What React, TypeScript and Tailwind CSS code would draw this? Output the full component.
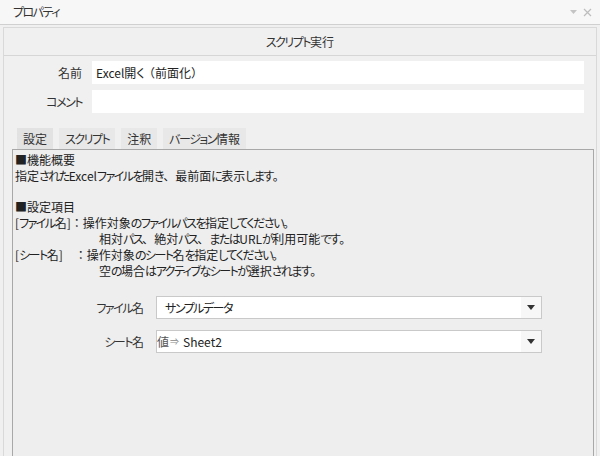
import React from 'react'

// kana runs get squeezed, full-width punctuation keeps its full width
function J({ t }: { t: string }) {
  const parts = t.match(/[\u3041-\u30ff]+|[、。（）：　]+|[^\u3041-\u30ff、。（）：　]+/g) ?? []
  return (
    <>
      {parts.map((p, i) =>
        /^[\u3041-\u30ff]/.test(p) ? (
          <span key={i} className="tracking-[-1.5px]">{p}</span>
        ) : /^[、。（）：　]/.test(p) ? (
          <span key={i} className="[font-feature-settings:normal]">{p}</span>
        ) : (
          <React.Fragment key={i}>{p}</React.Fragment>
        )
      )}
    </>
  )
}

function Tab({ label, active }: { label: string; active?: boolean }) {
  return (
    <div
      className={
        'h-[21px] px-[6px] flex items-center text-[12px] text-[#333] ' +
        (active ? 'bg-[#e2e2e2]' : 'bg-[#e8e8e8]')
      }
    >
      <J t={label} />
    </div>
  )
}

function Select({ value }: { value: React.ReactNode }) {
  return (
    <div className="flex-1 h-[23px] flex items-center bg-white border border-[#c9c9c9]">
      <div className="flex-1 flex items-center text-[12px] text-[#222] pl-[8px]">{value}</div>
      <div className="w-[20px] h-full flex items-center justify-center bg-[#f7f7f7]">
        <svg width="8" height="5" viewBox="0 0 8 5">
          <path d="M0 0 L8 0 L4 5 Z" fill="#333" />
        </svg>
      </div>
    </div>
  )
}

export default function App() {
  return (
    <div className="w-[600px] h-[456px] bg-[#f0f0f0] flex flex-col overflow-hidden text-[#1e1e1e] font-['Noto_Sans_CJK_JP','Noto_Sans',sans-serif] [font-feature-settings:'palt']">
      {/* title bar */}
      <div className="h-[25px] bg-[#f7f7f7] border-b border-[#d0d0d0] flex items-center justify-between pl-[13px] pr-[8px]">
        <span className="text-[12px] text-[#333]"><J t="プロパティ" /></span>
        <div className="flex items-center gap-[6px]">
          <svg width="7" height="4" viewBox="0 0 7 4">
            <path d="M0 0 L7 0 L3.5 4 Z" fill="#c4c4c4" />
          </svg>
          <svg width="9" height="9" viewBox="0 0 9 9">
            <path d="M1 1 L8 8 M8 1 L1 8" stroke="#bdbdbd" strokeWidth="1.2" />
          </svg>
        </div>
      </div>

      <div className="flex-1 mx-[3px] mt-[2px] border-l border-r border-t border-[#d9d9d9] flex flex-col">
        {/* header */}
        <div className="h-[28px] bg-[#f0f0f0] border-b border-[#d6d6d6] flex items-center justify-center text-[12px] text-[#333]">
          <J t="スクリプト実行" />
        </div>

        {/* name/comment */}
        <div className="flex flex-col gap-[6px] pt-[5px] pr-[12px]">
          <div className="flex items-center">
            <div className="w-[88px] text-right pr-[10px] text-[12px] text-[#333]">名前</div>
            <div className="flex-1 h-[23px] bg-white flex items-center pl-[4px] text-[12px] text-[#222]">
              <J t="Excel開く（前面化）" />
            </div>
          </div>
          <div className="flex items-center">
            <div className="w-[88px] text-right pr-[10px] text-[12px] text-[#333]"><J t="コメント" /></div>
            <div className="flex-1 h-[23px] bg-white" />
          </div>
        </div>

        {/* tabs */}
        <div className="flex gap-[6px] pl-[13px] mt-[15px]">
          <Tab label="設定" active />
          <Tab label="スクリプト" />
          <Tab label="注釈" />
          <Tab label="バージョン情報" />
        </div>

        {/* tab panel */}
        <div className="flex-1 ml-[8px] mr-[2px] border-l border-t border-r border-[#a8a8a8] bg-[#eeeeee] pt-[2px] pl-[2px]">
          <div className="text-[12px] leading-[16px] text-[#222]">
            <div><J t="■機能概要" /></div>
            <div><J t="指定されたExcelファイルを開き、最前面に表示します。" /></div>
            <div className="h-[15px]" />
            <div><J t="■設定項目" /></div>
            <div><J t="[ファイル名]：操作対象のファイルパスを指定してください。" /></div>
            <div className="pl-[84px]"><J t="相対パス、絶対パス、またはURLが利用可能です。" /></div>
            <div><J t="[シート名]　：操作対象のシート名を指定してください。" /></div>
            <div className="pl-[84px]"><J t="空の場合はアクティブなシートが選択されます。" /></div>
          </div>

          <div className="flex flex-col gap-[11px] mt-[17px] pr-[51px]">
            <div className="flex items-center">
              <div className="w-[141px] text-right pr-[12px] text-[12px] text-[#333]"><J t="ファイル名" /></div>
              <Select value={<J t="サンプルデータ" />} />
            </div>
            <div className="flex items-center">
              <div className="w-[141px] text-right pr-[12px] text-[12px] text-[#333]"><J t="シート名" /></div>
              <Select
                value={
                  <span className="-ml-[8px] flex items-center">
                    <span className="text-[#555]">値</span>
                    <span className="text-[9px] text-[#888] ml-[1px]">⇒</span>
                    <span className="ml-[4px]">Sheet2</span>
                  </span>
                }
              />
            </div>
          </div>
        </div>
      </div>
    </div>
  )
}
